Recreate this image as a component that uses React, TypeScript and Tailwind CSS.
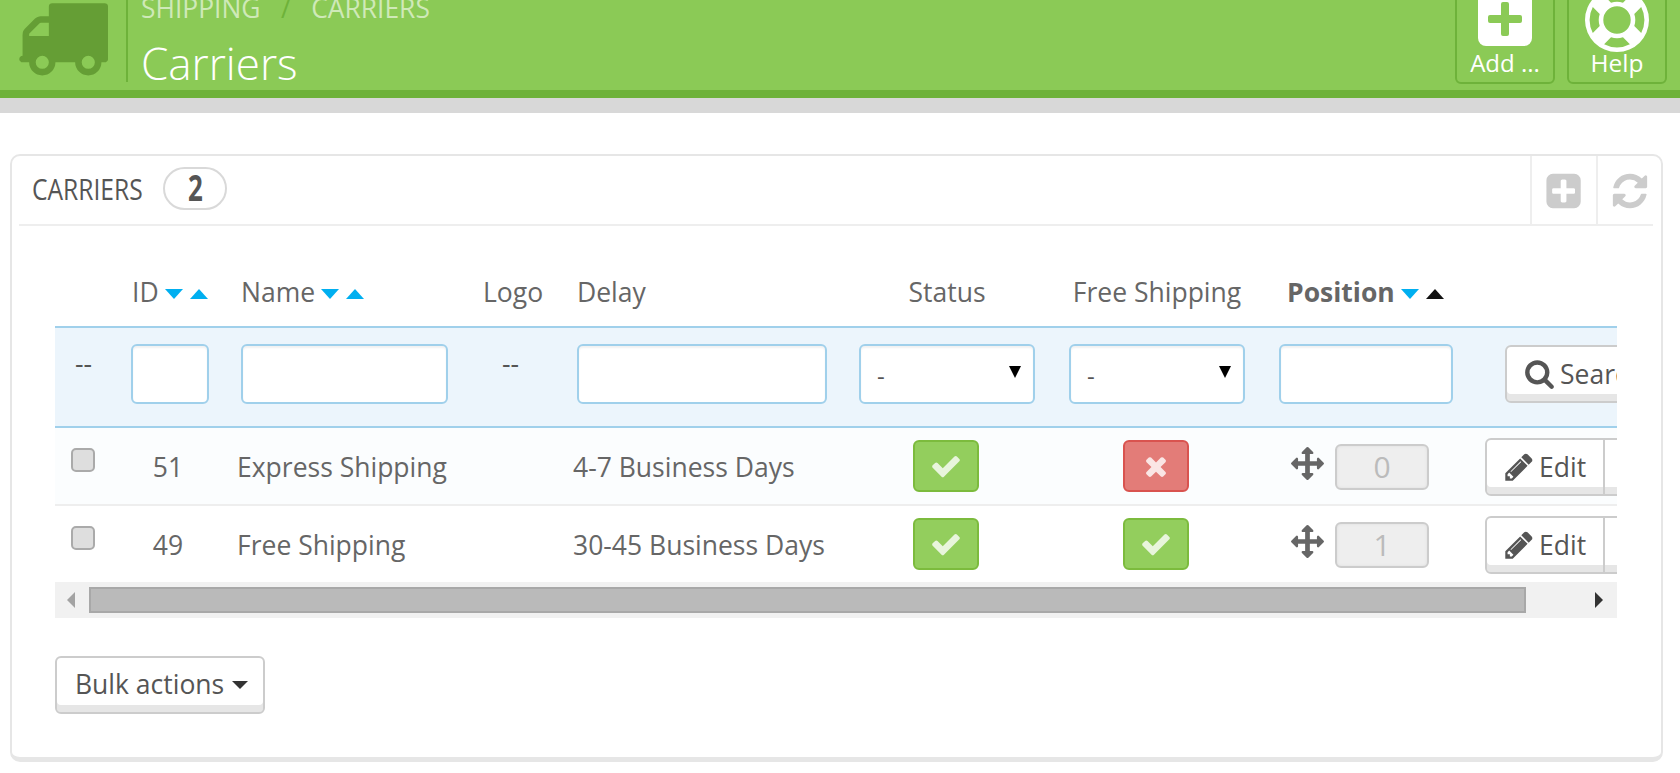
const icons = {
  truck:
    "M640 1408q0-52-38-90t-90-38-90 38-38 90 38 90 90 38 90-38 38-90zm-384-512h384v-256h-158q-13 0-22 9l-195 195q-9 9-9 22v30zm1280 512q0-52-38-90t-90-38-90 38-38 90 38 90 90 38 90-38 38-90zm256-1088v1024q0 15-4 26.5t-13.5 18.5-16.5 11.5-23.5 6-22.5 2-25.5 0-22.5-.5q0 106-75 181t-181 75-181-75-75-181h-384q0 106-75 181t-181 75-181-75-75-181h-64q-3 0-22.5.5t-25.5 0-22.5-2-23.5-6-16.5-11.5-13.5-18.5-4-26.5q0-26 19-45t45-19v-320q0-8-.5-35t0-38 2.5-34.5 6.5-37 14-30.5 22.5-30l198-198q19-19 50.5-32t58.5-13h160v-192q0-26 19-45t45-19h1024q26 0 45 19t19 45z",
  lifeRing:
    "M896 0q182 0 348 71t286 191 191 286 71 348-71 348-191 286-286 191-348 71-348-71-286-191-191-286-71-348 71-348 191-286 286-191 348-71zm0 128q-190 0-361 90l194 194q82-28 167-28t167 28l194-194q-171-90-361-90zm-678 1129l194-194q-28-82-28-167t28-167l-194-194q-90 171-90 361t90 361zm678 407q190 0 361-90l-194-194q-82 28-167 28t-167-28l-194 194q171 90 361 90zm0-384q159 0 271.5-112.5t112.5-271.5-112.5-271.5-271.5-112.5-271.5 112.5-112.5 271.5 112.5 271.5 271.5 112.5zm484-217l194 194q90-171 90-361t-90-361l-194 194q28 82 28 167t-28 167z",
  plusSquare:
    "M1344 960v-128q0-26-19-45t-45-19h-320v-320q0-26-19-45t-45-19h-128q-26 0-45 19t-19 45v320h-320q-26 0-45 19t-19 45v128q0 26 19 45t45 19h320v320q0 26 19 45t45 19h128q26 0 45-19t19-45v-320h320q26 0 45-19t19-45zm256-544v960q0 119-84.5 203.5t-203.5 84.5h-960q-119 0-203.5-84.5t-84.5-203.5v-960q0-119 84.5-203.5t203.5-84.5h960q119 0 203.5 84.5t84.5 203.5z",
  refresh:
    "M1639 1056q0 5-1 7-64 268-268 434.5t-478 166.5q-146 0-282.5-55t-243.5-157l-129 129q-19 19-45 19t-45-19-19-45v-448q0-26 19-45t45-19h448q26 0 45 19t19 45-19 45l-137 137q71 66 161 102t187 36q134 0 250-65t186-179q11-17 53-117 8-23 30-23h192q13 0 22.5 9.5t9.5 22.5zm25-800v448q0 26-19 45t-45 19h-448q-26 0-45-19t-19-45 19-45l138-138q-148-137-349-137-134 0-250 65t-186 179q-11 17-53 117-8 23-30 23h-199q-13 0-22.5-9.5t-9.5-22.5v-7q65-268 270-434.5t480-166.5q146 0 284 55.5t245 156.5l130-129q19-19 45-19t45 19 19 45z",
  check:
    "M1671 566q0 40-28 68l-724 724-136 136q-28 28-68 28t-68-28l-136-136-362-362q-28-28-28-68t28-68l136-136q28-28 68-28t68 28l294 295 656-657q28-28 68-28t68 28l136 136q28 28 28 68z",
  times:
    "M1490 1322q0 40-28 68l-136 136q-28 28-68 28t-68-28l-294-294-294 294q-28 28-68 28t-68-28l-136-136q-28-28-28-68t28-68l294-294-294-294q-28-28-28-68t28-68l136-136q28-28 68-28t68 28l294 294 294-294q28-28 68-28t68 28l136 136q28 28 28 68t-28 68l-294 294 294 294q28 28 28 68z",
  move:
    "M1792 896q0 26-19 45l-256 256q-19 19-45 19t-45-19-19-45v-128h-384v384h128q26 0 45 19t19 45-19 45l-256 256q-19 19-45 19t-45-19l-256-256q-19-19-19-45t19-45 45-19h128v-384h-384v128q0 26-19 45t-45 19-45-19l-256-256q-19-19-19-45t19-45l256-256q19-19 45-19t45 19 19 45v128h384v-384h-128q-26 0-45-19t-19-45 19-45l256-256q19-19 45-19t45 19l256 256q19 19 19 45t-19 45-45 19h-128v384h384v-128q0-26 19-45t45-19 45 19l256 256q19 19 19 45z",
  search:
    "M1216 832q0-185-131.5-316.5t-316.5-131.5-316.5 131.5-131.5 316.5 131.5 316.5 316.5 131.5 316.5-131.5 131.5-316.5zm512 832q0 52-38 90t-90 38q-54 0-90-38l-343-342q-179 124-399 124-143 0-273.5-55.5t-225-150-150-225-55.5-273.5 55.5-273.5 150-225 225-150 273.5-55.5 273.5 55.5 225 150 150 225 55.5 273.5q0 220-124 399l343 343q37 37 37 90z",
  pencil:
    "M491 1536l91-91-235-235-91 91v107h128v128h107zm523-928q0-22-22-22-10 0-17 7l-542 542q-7 7-7 17 0 22 22 22 10 0 17-7l542-542q7-7 7-17zm-54-192l416 416-832 832h-416v-416zm683 96q0 53-37 90l-166 166-416-416 166-165q36-38 90-38 53 0 91 38l235 234q37 39 37 91z",
};

function Icon({ d, size, className }: { d: string; size: number; className?: string }) {
  return (
    <svg width={size} height={size} viewBox="0 0 1792 1792" className={`shrink-0 ${className ?? ""}`}>
      <path d={d} fill="currentColor" />
    </svg>
  );
}

const carriers = [
  { id: 51, name: "Express Shipping", delay: "4-7 Business Days", free: false, position: 0 },
  { id: 49, name: "Free Shipping", delay: "30-45 Business Days", free: true, position: 1 },
];

function Sort({ active }: { active?: boolean }) {
  return (
    <span className="inline-flex items-center gap-[7px] ml-[6px] align-[3px]">
      <svg width="18" height="10" viewBox="0 0 18 10"><path d="M0 0h18L9 10z" fill="#00aff0" /></svg>
      <svg width="18" height="10" viewBox="0 0 18 10"><path d="M0 10h18L9 0z" fill={active ? "#111111" : "#00aff0"} /></svg>
    </span>
  );
}

function FilterInput({ width }: { width: string }) {
  return (
    <input
      readOnly
      className={`mb-[7px] ml-[4px] block h-[60px] ${width} rounded-[6px] border-2 border-[#a0d0eb] bg-white shadow-[inset_0_2px_2px_#f2f2f2]`}
    />
  );
}

function FilterSelect() {
  return (
    <div className="mb-[7px] ml-[4px] flex h-[60px] w-[176px] items-center justify-between rounded-[6px] border-2 border-[#a0d0eb] bg-white pl-[16px] pr-[12px] shadow-[inset_0_2px_2px_#f2f2f2]">
      <span className="mt-[4px] text-[24px] text-[#555]">-</span>
      <svg width="12" height="12" viewBox="0 0 12 12" className="-mt-[4px]"><path d="M0 0h12L6 12z" fill="#000" /></svg>
    </div>
  );
}

function StatusButton({ on }: { on: boolean }) {
  return (
    <div className="flex w-[182px] justify-center">
      <div
        className={
          on
            ? "flex h-[52px] w-[66px] items-center justify-center rounded-[6px] border-2 border-[#7cbb3d] bg-[#93ce5d] text-[#e8f5dc]"
            : "flex h-[52px] w-[66px] items-center justify-center rounded-[6px] border-2 border-[#d9534f] bg-[#e37c78] text-[#fae6e5]"
        }
      >
        <Icon d={on ? icons.check : icons.times} size={on ? 32 : 30} />
      </div>
    </div>
  );
}

export default function App() {
  return (
    <div className="min-h-[773px] bg-white font-['Open_Sans',sans-serif] text-[#666]">
      {/* page head */}
      <div className="h-[113px] overflow-hidden border-b-[15px] border-[#d8d8d8]">
        <div className="flex h-[98px] border-b-[8px] border-[#6eb23a] bg-[#8bca56] pl-[16px] pr-[13px]">
          <Icon d={icons.truck} size={92} className="-mt-[10px] text-[#659e35]" />
          <div className="ml-[18px] h-[82px] w-[2px] shrink-0 bg-[#6eb23a]" />
          <div className="ml-[13px] -mt-[10px]">
            <div className="flex h-[36px] items-center text-[26.4px] font-normal leading-none text-[#cfe9b8]">
              <span>SHIPPING</span>
              <span className="mx-[20.5px] text-[#6eb23a]">/</span>
              <span>CARRIERS</span>
            </div>
            <div className="mt-[15px] text-[44px] font-light leading-none text-white">Carriers</div>
          </div>
          <div className="ml-auto flex gap-[12px]">
            <div className="-mt-[8px] flex h-[92px] w-[100px] flex-col items-center rounded-[6px] border-2 border-[#6eb23a]">
              <div className="flex h-[52px] w-[54px] shrink-0 items-center justify-center rounded-b-[8px] bg-white">
                <svg width="36" height="36" viewBox="0 0 36 36" className="-mt-[2px]"><path fill="#8bca56" d="M14 3a2 2 0 0 1 2-2h4a2 2 0 0 1 2 2v11h11a2 2 0 0 1 2 2v4a2 2 0 0 1-2 2H22v11a2 2 0 0 1-2 2h-4a2 2 0 0 1-2-2V22H3a2 2 0 0 1-2-2v-4a2 2 0 0 1 2-2h11z" /></svg>
              </div>
              <div className="mt-[1px] text-[24px] leading-[32px] text-white">Add ...</div>
            </div>
            <div className="-mt-[8px] flex h-[92px] w-[100px] flex-col items-center rounded-[6px] border-2 border-[#6eb23a]">
              <Icon d={icons.lifeRing} size={64} className="-mt-[6px] text-white" />
              <div className="-mt-[5px] text-[24.5px] leading-[32px] text-white">Help</div>
            </div>
          </div>
        </div>
      </div>

      {/* panel */}
      <div className="ml-[10px] mr-[17px] mt-[41px] h-[608px] rounded-[10px] border-2 border-b-[5px] border-[#e6e6e6] bg-white pl-[7px] pr-[8px]">
        <div className="flex h-[70px] items-stretch border-b-2 border-[#eeeeee]">
          <div className="flex items-center pb-[4px] pl-[13px]">
            <span className="mt-[2px] inline-block w-[110px] origin-left scale-x-[0.82] whitespace-nowrap text-[30px] leading-none text-[#555]">CARRIERS</span>
            <span className="ml-[21px] flex h-[43px] w-[64px] items-center justify-center rounded-full border-2 border-[#d9d9d9]">
              <span className="inline-block scale-x-[0.72] text-[36px] font-bold leading-none text-[#555]">2</span>
            </span>
          </div>
          <div className="ml-auto flex">
            <div className="flex w-[66px] items-center justify-center border-l-2 border-[#eeeeee] pl-[2px] pt-[2px]">
              <Icon d={icons.plusSquare} size={40} className="text-[#cccccc]" />
            </div>
            <div className="flex w-[57px] items-center justify-center border-l-2 border-[#eeeeee] pl-[8px] pt-[2px]">
              <Icon d={icons.refresh} size={40} className="text-[#cccccc]" />
            </div>
          </div>
        </div>

        <div className="ml-[36px] mt-[34px] w-[1562px] overflow-hidden">
          <table className="w-[1700px] table-fixed border-collapse text-[26.5px]">
            <colgroup>
              <col className="w-[72px]" />
              <col className="w-[110px]" />
              <col className="w-[242px]" />
              <col className="w-[94px]" />
              <col className="w-[282px]" />
              <col className="w-[210px]" />
              <col className="w-[210px]" />
              <col className="w-[210px]" />
              <col className="w-[270px]" />
            </colgroup>
            <thead>
              <tr className="h-[67px] text-left">
                <th />
                <th className="pl-[5px] font-normal"><span>ID</span><Sort /></th>
                <th className="pl-[4px] font-normal"><span>Name</span><Sort /></th>
                <th className="pl-[4px] font-normal">Logo</th>
                <th className="pl-[4px] font-normal">Delay</th>
                <th className="font-normal"><div className="w-[184px] text-center">Status</div></th>
                <th className="font-normal"><div className="w-[184px] whitespace-nowrap text-center">Free Shipping</div></th>
                <th className="pl-[12px] whitespace-nowrap font-bold"><span>Position</span><Sort active /></th>
                <th />
              </tr>
            </thead>
            <tbody>
              <tr className="h-[100px] border-y-2 border-[#a0d0eb] bg-[#ecf5fc]">
                <td className="pb-[27px] pl-[20px] text-[#555]">--</td>
                <td><FilterInput width="w-[78px]" /></td>
                <td><FilterInput width="w-[207px]" /></td>
                <td className="pb-[27px] pl-[23px] text-[#555]">--</td>
                <td><FilterInput width="w-[250px]" /></td>
                <td><FilterSelect /></td>
                <td><FilterSelect /></td>
                <td><FilterInput width="w-[174px]" /></td>
                <td className="pl-[20px]">
                  <div className="mb-[7px] flex h-[58px] w-[170px] items-center rounded-[6px] border-2 border-[#cccccc] bg-white pl-[17px] text-[#555] shadow-[inset_0_-7px_0_#e6e6e6]">
                    <Icon d={icons.search} size={31} />
                    <span className="ml-[5px] mt-[2px]">Search</span>
                  </div>
                </td>
              </tr>
              {carriers.map((carrier, index) => (
                <tr key={carrier.id} className={index === 0 ? "h-[78px] border-b-2 border-[#eeeeee] bg-[#fbfdfe]" : "h-[77px]"}>
                  <td className="align-top pl-[16px] pt-[20px]">
                    <div className="h-[24px] w-[24px] rounded-[5px] border-2 border-[#aaaaaa] bg-[#dedede]" />
                  </td>
                  <td className="pr-[28px] pt-[3px] text-center">{carrier.id}</td>
                  <td className="whitespace-nowrap pt-[3px]">{carrier.name}</td>
                  <td />
                  <td className="whitespace-nowrap pt-[3px]">{carrier.delay}</td>
                  <td><StatusButton on /></td>
                  <td><StatusButton on={carrier.free} /></td>
                  <td>
                    <div className="flex items-center pl-[16px] pt-[1px]">
                      <Icon d={icons.move} size={33} className="-mt-[6px] text-[#666]" />
                      <div className="ml-[11px] flex h-[46px] w-[94px] items-center justify-center rounded-[6px] border-2 border-[#cccccc] bg-[#eeeeee] text-[30px] text-[#bbbbbb] shadow-[inset_0_0_3px_#dddddd]">
                        {carrier.position}
                      </div>
                    </div>
                  </td>
                  <td className="pt-[1px]">
                    <div className="flex h-[58px] w-[240px] rounded-[6px] border-2 border-[#cccccc] bg-white text-[#555] shadow-[inset_0_-7px_0_#e6e6e6]">
                      <div className="flex w-[118px] items-center border-r-2 border-[#cccccc] pl-[16px]">
                        <Icon d={icons.pencil} size={32} />
                        <span className="ml-[4px] mt-[2px]">Edit</span>
                      </div>
                    </div>
                  </td>
                </tr>
              ))}
            </tbody>
          </table>

          {/* horizontal scrollbar */}
          <div className="flex h-[36px] items-center bg-[#f1f1f1] pl-[12px] pr-[14px]">
            <svg width="8" height="16" viewBox="0 0 8 16" className="shrink-0"><path d="M8 0v16L0 8z" fill="#a3a3a3" /></svg>
            <div className="ml-[14px] h-[26px] w-[1437px] shrink-0 border-2 border-[#a8a8a8] bg-[#bababa]" />
            <svg width="8" height="16" viewBox="0 0 8 16" className="ml-auto shrink-0"><path d="M0 0v16l8-8z" fill="#333" /></svg>
          </div>
        </div>

        <div className="ml-[36px] mt-[38px] flex h-[58px] w-[210px] items-center rounded-[6px] border-2 border-[#cccccc] bg-white pl-[18px] text-[26.5px] text-[#555] shadow-[inset_0_-7px_0_#e6e6e6]">
          <span>Bulk actions</span>
          <svg width="16" height="8" viewBox="0 0 16 8" className="ml-[8px]"><path d="M0 0h16L8 8z" fill="#333" /></svg>
        </div>
      </div>
    </div>
  );
}
